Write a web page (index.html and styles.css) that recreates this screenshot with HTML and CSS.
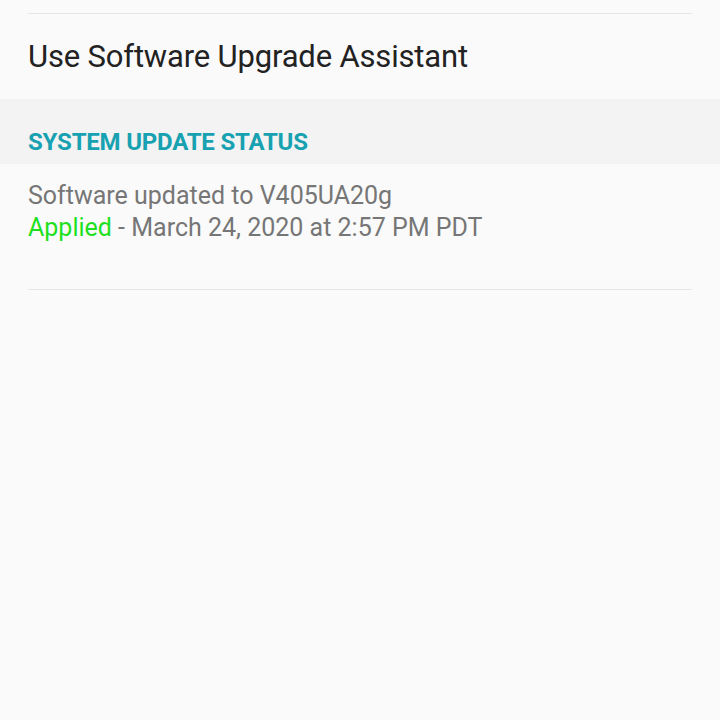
FILE: index.html
```html
<!DOCTYPE html>
<html lang="en">
<head>
<meta charset="UTF-8" />
<meta name="viewport" content="width=device-width, initial-scale=1" />
<title>Software update</title>
<link rel="stylesheet" href="styles.css">
</head>
<body>

<div class="item">
  <div class="item-title">Use Software Upgrade Assistant</div>
</div>

<div class="category">SYSTEM UPDATE STATUS</div>

<div class="status">
  <div class="status-line">Software updated to V405UA20g</div>
  <div class="status-line"><span class="applied">Applied</span> - March 24, 2020 at 2:57 PM PDT</div>
</div>

</body>
</html>
```

FILE: styles.css
```css
body {
  margin: 0;
  background: #fafafa;
  font-family: Roboto, "Noto Sans", sans-serif;
  padding-top: 13px;
}
.item {
  margin: 0 28px;
  border-top: 1px solid #e6e6e6;
  height: 85px;
  display: flex;
  align-items: center;
}
.item-title {
  font-size: 31px;
  letter-spacing: -0.17px;
  color: #222;
}
.category {
  background: #f3f3f3;
  height: 65px;
  padding: 0 28px;
  display: flex;
  align-items: center;
  padding-top: 20px;
  box-sizing: border-box;
  font-size: 24px;
  letter-spacing: -0.2px;
  font-weight: bold;
  color: #17a1b1;
}
.status {
  margin: 0 28px;
  padding-top: 16px;
  height: 126px;
  box-sizing: border-box;
  border-bottom: 1px solid #e6e6e6;
}
.status-line {
  font-size: 25px;
  line-height: 32px;
  color: #767676;
}
.applied {
  color: #1ee01e;
}
```
